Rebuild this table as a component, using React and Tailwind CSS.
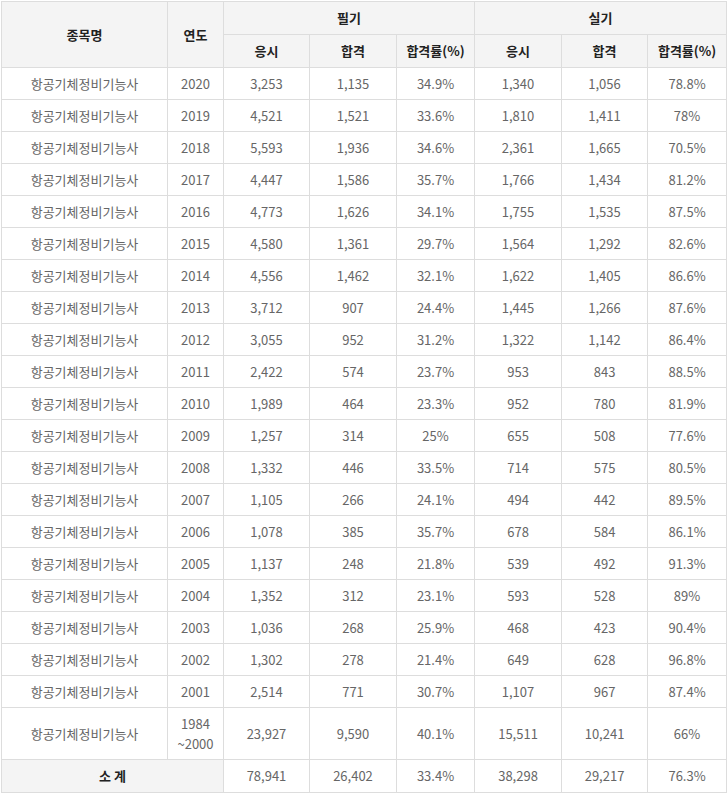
import React from 'react';

const rows = [
  ['2020', '3,253', '1,135', '34.9%', '1,340', '1,056', '78.8%'],
  ['2019', '4,521', '1,521', '33.6%', '1,810', '1,411', '78%'],
  ['2018', '5,593', '1,936', '34.6%', '2,361', '1,665', '70.5%'],
  ['2017', '4,447', '1,586', '35.7%', '1,766', '1,434', '81.2%'],
  ['2016', '4,773', '1,626', '34.1%', '1,755', '1,535', '87.5%'],
  ['2015', '4,580', '1,361', '29.7%', '1,564', '1,292', '82.6%'],
  ['2014', '4,556', '1,462', '32.1%', '1,622', '1,405', '86.6%'],
  ['2013', '3,712', '907', '24.4%', '1,445', '1,266', '87.6%'],
  ['2012', '3,055', '952', '31.2%', '1,322', '1,142', '86.4%'],
  ['2011', '2,422', '574', '23.7%', '953', '843', '88.5%'],
  ['2010', '1,989', '464', '23.3%', '952', '780', '81.9%'],
  ['2009', '1,257', '314', '25%', '655', '508', '77.6%'],
  ['2008', '1,332', '446', '33.5%', '714', '575', '80.5%'],
  ['2007', '1,105', '266', '24.1%', '494', '442', '89.5%'],
  ['2006', '1,078', '385', '35.7%', '678', '584', '86.1%'],
  ['2005', '1,137', '248', '21.8%', '539', '492', '91.3%'],
  ['2004', '1,352', '312', '23.1%', '593', '528', '89%'],
  ['2003', '1,036', '268', '25.9%', '468', '423', '90.4%'],
  ['2002', '1,302', '278', '21.4%', '649', '628', '96.8%'],
  ['2001', '2,514', '771', '30.7%', '1,107', '967', '87.4%'],
];

const th = 'border border-[#dddddd] bg-[#f4f4f4] font-bold text-[#222222] text-center align-middle p-0';
const td = 'border border-[#dddddd] text-[#666666] text-center align-middle p-0';

export default function App() {
  return (
    <div className="pt-px pl-px bg-white" style={{ fontFamily: '"Noto Sans CJK KR", "Noto Sans", sans-serif' }}>
      <table className="border-collapse table-fixed w-[725px] text-[13px] leading-[16px]">
        <colgroup>
          <col className="w-[166px]" />
          <col className="w-[56px]" />
          <col className="w-[86px]" />
          <col className="w-[87px]" />
          <col className="w-[78px]" />
          <col className="w-[87px]" />
          <col className="w-[86px]" />
          <col className="w-[79px]" />
        </colgroup>
        <thead>
          <tr className="h-[33px]">
            <th rowSpan={2} className={th}>종목명</th>
            <th rowSpan={2} className={th}>연도</th>
            <th colSpan={3} className={th}>필기</th>
            <th colSpan={3} className={th}>실기</th>
          </tr>
          <tr className="h-[33px]">
            <th className={th}>응시</th>
            <th className={th}>합격</th>
            <th className={th}>합격률(%)</th>
            <th className={th}>응시</th>
            <th className={th}>합격</th>
            <th className={th}>합격률(%)</th>
          </tr>
        </thead>
        <tbody>
          {rows.map((r) => (
            <tr key={r[0]} className="h-[32px]">
              <td className={td}>항공기체정비기능사</td>
              {r.map((v, i) => (
                <td key={i} className={td}>{v}</td>
              ))}
            </tr>
          ))}
          <tr className="h-[52px]">
            <td className={td}>항공기체정비기능사</td>
            <td className={`${td} leading-[20px]`}>1984<br />~2000</td>
            <td className={td}>23,927</td>
            <td className={td}>9,590</td>
            <td className={td}>40.1%</td>
            <td className={td}>15,511</td>
            <td className={td}>10,241</td>
            <td className={td}>66%</td>
          </tr>
          <tr className="h-[33px]">
            <td colSpan={2} className={th}>소 계</td>
            <td className={td}>78,941</td>
            <td className={td}>26,402</td>
            <td className={td}>33.4%</td>
            <td className={td}>38,298</td>
            <td className={td}>29,217</td>
            <td className={td}>76.3%</td>
          </tr>
        </tbody>
      </table>
    </div>
  );
}
